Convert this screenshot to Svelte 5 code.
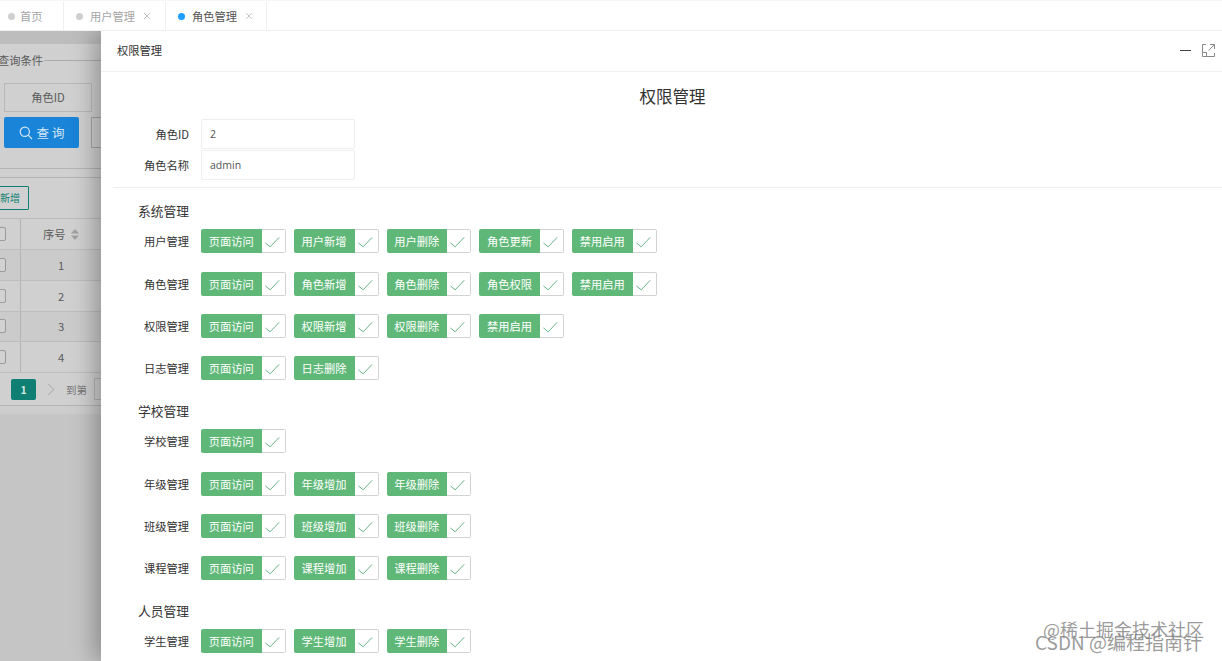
<script>
  const tabs = [
    { name: "首页", width: 64, close: false },
    { name: "用户管理", width: 102, close: true },
    { name: "角色管理", width: 101, close: true, active: true }
  ];

  const sections = [
    {
      title: "系统管理",
      rows: [
        { label: "用户管理", perms: ["页面访问", "用户新增", "用户删除", "角色更新", "禁用启用"] },
        { label: "角色管理", perms: ["页面访问", "角色新增", "角色删除", "角色权限", "禁用启用"] },
        { label: "权限管理", perms: ["页面访问", "权限新增", "权限删除", "禁用启用"] },
        { label: "日志管理", perms: ["页面访问", "日志删除"] }
      ]
    },
    {
      title: "学校管理",
      rows: [
        { label: "学校管理", perms: ["页面访问"] },
        { label: "年级管理", perms: ["页面访问", "年级增加", "年级删除"] },
        { label: "班级管理", perms: ["页面访问", "班级增加", "班级删除"] },
        { label: "课程管理", perms: ["页面访问", "课程增加", "课程删除"] }
      ]
    },
    {
      title: "人员管理",
      rows: [{ label: "学生管理", perms: ["页面访问", "学生增加", "学生删除"] }]
    }
  ];
</script>

<div class="app">
  <nav class="tabs">
    {#each tabs as tab}
      <div class="tab" class:active={tab.active} style="width: {tab.width}px">
        <span class="dot"></span>
        <span class="tab-name">{tab.name}</span>
        {#if tab.close}
          <svg class="tab-close" width="8" height="8" viewBox="0 0 8 8">
            <path d="M1 1 L7 7 M7 1 L1 7" />
          </svg>
        {/if}
      </div>
    {/each}
  </nav>

  <div class="stage">
    <section class="behind">
      <div class="band"></div>
      <div class="panel">
        <div class="legend"><span>查询条件</span><i></i></div>
        <div class="cell">角色ID</div>
        <div class="actions">
          <button class="search">
            <svg width="14" height="14" viewBox="0 0 14 14">
              <circle cx="5.8" cy="5.8" r="4.6" />
              <path d="M9.2 9.2 L13 13" />
            </svg>
            查 询
          </button>
          <span class="ghost"></span>
        </div>
        <div class="rule"></div>
        <button class="add">新增</button>
        <div class="table">
          <div class="tr head">
            <span class="tick"><b></b></span>
            <span class="num">序号
              <svg width="8" height="11" viewBox="0 0 8 11"><path d="M4 0 L8 4.4 H0 Z M4 11 L8 6.6 H0 Z" /></svg>
            </span>
          </div>
          {#each [1, 2, 3, 4] as n}
            <div class="tr" class:odd={n % 2 === 1}>
              <span class="tick"><b></b></span>
              <span class="num">{n}</span>
            </div>
          {/each}
        </div>
        <div class="pager">
          <span class="page-on">1</span>
          <svg width="8" height="13" viewBox="0 0 8 13"><path d="M1 1 L7 6.5 L1 12" /></svg>
          <span class="goto">到第</span>
          <i></i>
        </div>
        <div class="foot"></div>
      </div>
    </section>

    <aside class="drawer">
      <header class="drawer-head">
        <span>权限管理</span>
        <div class="win">
          <svg width="12" height="12" viewBox="0 0 12 12"><path d="M0 6.5 H11" /></svg>
          <svg class="max" width="13" height="13" viewBox="0 0 13 13">
            <path d="M4 .5 H.5 V12.5 H12.5 V9 M8 .5 H12.5 V5 M12.5 .5 L6.5 6.5 M.5 8.5 H4.5 V12.5" />
          </svg>
        </div>
      </header>

      <div class="drawer-body">
        <h1>权限管理</h1>
        <div class="field">
          <label for="role-id">角色ID</label>
          <input id="role-id" value="2" />
        </div>
        <div class="field">
          <label for="role-name">角色名称</label>
          <input id="role-name" value="admin" />
        </div>
        <hr />

        {#each sections as section}
          <h2>{section.title}</h2>
          {#each section.rows as row}
            <div class="perm-row">
              <span class="perm-label">{row.label}</span>
              <div class="perms">
                {#each row.perms as perm}
                  <div class="check">
                    <span class="check-text">{perm}</span>
                    <span class="check-box">
                      <svg width="24" height="24" viewBox="0 0 24 24">
                        <path d="M4.5 14 L9.2 17.8 L18.2 8.3" />
                      </svg>
                    </span>
                  </div>
                {/each}
              </div>
            </div>
          {/each}
        {/each}
      </div>
    </aside>
  </div>

  <div class="mark">
    <span>@稀土掘金技术社区</span>
    <span class="csdn">CSDN @编程指南针</span>
  </div>
</div>

<style>
  :global(body) {
    margin: 0;
    overflow: hidden;
    background: #fff;
  }

  .app {
    position: relative;
    width: 1222px;
    height: 661px;
    overflow: hidden;
    display: flex;
    flex-direction: column;
    font-family: "Noto Sans CJK SC", "Open Sans", sans-serif;
    font-size: 11.25px;
    color: #333;
  }

  .tabs {
    position: relative;
    z-index: 1;
    height: 31px;
    flex: none;
    box-sizing: border-box;
    padding-top: 2px;
    display: flex;
    background: #fff;
    border-top: 1px solid #f6f6f6;
    border-bottom: 1px solid #f0f0f0;
  }

  .tab {
    box-sizing: border-box;
    display: flex;
    align-items: center;
    padding-left: 8px;
    border-right: 1px solid #f0f0f0;
    color: #a5a5a5;
    margin-top: -1px;
  }

  .tab + .tab {
    padding-left: 12px;
  }

  .dot {
    width: 7px;
    height: 7px;
    border-radius: 50%;
    background: #cfcfcf;
    margin-right: 5px;
  }

  .tab + .tab .tab-name {
    margin-left: 2px;
  }

  .tab.active {
    color: #555;
  }

  .tab.active .dot {
    background: #1e9fff;
  }

  .tab-close {
    margin-left: 8px;
    fill: none;
    stroke: #c4c4c4;
    stroke-width: 1;
  }

  .stage {
    flex: 1;
    display: flex;
    min-height: 0;
  }

  .behind {
    width: 101px;
    flex: none;
    overflow: hidden;
    background: #c5c5c5;
    color: #5a5a5a;
  }

  .band {
    height: 13px;
    background: #bdbdbd;
  }

  .panel {
    background: #d0d0d0;
    overflow: hidden;
  }

  .legend {
    display: flex;
    align-items: center;
    gap: 1px;
    height: 16px;
    margin: 8px 0 0 -2px;
    white-space: nowrap;
  }

  .legend i {
    flex: 1;
    height: 1px;
    background: #acacac;
  }

  .cell {
    box-sizing: border-box;
    width: 88px;
    height: 29px;
    margin: 15px 0 0 4px;
    border: 1px solid #b8b8b8;
    display: flex;
    align-items: center;
    justify-content: center;
    padding-bottom: 2px;
  }

  .actions {
    display: flex;
    gap: 12px;
    margin: 5px 0 0 4px;
  }

  .search {
    width: 75px;
    height: 31px;
    flex: none;
    border: 0;
    border-radius: 2px;
    background: #1a84d8;
    color: #d4e6f5;
    font: inherit;
    font-size: 12.5px;
    display: flex;
    align-items: center;
    justify-content: center;
    gap: 4px;
    padding: 0;
  }

  .search svg {
    fill: none;
    stroke: #d4e6f5;
    stroke-width: 1.2;
  }

  .ghost {
    width: 30px;
    height: 29px;
    flex: none;
    border: 1px solid #a5a5a5;
  }

  .rule {
    box-sizing: border-box;
    height: 10px;
    margin-top: 20px;
    border-top: 1px solid #b4b4b4;
    border-bottom: 1px solid #b4b4b4;
  }

  .add {
    display: block;
    box-sizing: border-box;
    width: 38px;
    height: 24px;
    margin: 8px 0 0 -9px;
    padding: 0 8px 2px 0;
    border: 1px solid #0f7f74;
    border-radius: 1px;
    background: transparent;
    color: #0f7f74;
    font: inherit;
    font-size: 10px;
    text-align: right;
  }

  .table {
    margin-top: 8px;
    border-top: 1px solid #bcbcbc;
  }

  .tr {
    display: flex;
    height: 30.75px;
    align-items: center;
    border-bottom: 1px solid #bdbdbd;
    box-sizing: border-box;
  }

  .tr.head {
    height: 31px;
  }

  .tr.odd {
    background: rgba(0, 0, 0, 0.02);
  }

  .tick {
    box-sizing: border-box;
    width: 21px;
    height: 100%;
    flex: none;
    border-right: 1px solid #b4b4b4;
    display: flex;
    align-items: center;
    justify-content: flex-end;
    padding-right: 14px;
  }

  .tick b {
    flex: none;
    width: 14px;
    height: 14px;
    border: 1px solid #9a9a9a;
    border-radius: 2px;
    box-sizing: border-box;
    background: #d2d2d2;
  }

  .num {
    width: 80px;
    text-align: center;
    flex: none;
    white-space: nowrap;
  }

  .num svg {
    fill: #a0a0a0;
    margin-left: 3px;
    vertical-align: -1px;
  }

  .pager {
    display: flex;
    align-items: center;
    box-sizing: border-box;
    height: 33px;
    padding-left: 11px;
    border-bottom: 1px solid #b4b4b4;
  }

  .page-on {
    width: 25px;
    height: 21px;
    flex: none;
    border-radius: 2px;
    background: #0f7f74;
    color: #cfe5e2;
    font-size: 10.5px;
    font-weight: 700;
    display: flex;
    align-items: center;
    justify-content: center;
  }

  .pager svg {
    margin-left: 11px;
    flex: none;
    fill: none;
    stroke: #a8a8a8;
  }

  .goto {
    margin-left: 11px;
    font-size: 10.5px;
    color: #777;
    white-space: nowrap;
    flex: none;
  }

  .pager i {
    margin-left: 7px;
    flex: none;
    width: 20px;
    height: 20px;
    border: 1px solid #b4b4b4;
  }

  .foot {
    height: 8px;
    background: #cdcdcd;
  }

  .drawer {
    position: relative;
    flex: 1;
    min-width: 0;
    background: #fff;
    box-shadow: -6px 0 22px rgba(0, 0, 0, 0.3);
  }

  .drawer-head {
    box-sizing: border-box;
    height: 41px;
    padding: 0 7px 2px 16px;
    display: flex;
    align-items: center;
    justify-content: space-between;
    border-bottom: 1px solid #f0f0f0;
    color: #333;
  }

  .win {
    display: flex;
    align-items: center;
    gap: 10px;
  }

  .win svg {
    fill: none;
    stroke: #444;
    stroke-width: 1;
  }

  .win .max {
    stroke: #888;
  }

  .drawer-body {
    padding-left: 12px;
  }

  h1 {
    margin: 0;
    padding: 12px 0 11px 10px;
    font-size: 16.5px;
    line-height: 24px;
    font-weight: 400;
    text-align: center;
    color: #333;
  }

  .field {
    display: flex;
    align-items: center;
    gap: 12px;
    height: 30px;
    margin-bottom: 1px;
  }

  .field label {
    width: 76px;
    text-align: right;
    flex: none;
    margin-top: -1px;
  }

  .field input {
    box-sizing: border-box;
    width: 154px;
    height: 30px;
    padding: 0 8px;
    border: 1px solid #eee;
    border-radius: 2px;
    font: inherit;
    font-family: "Open Sans", sans-serif;
    font-size: 10.5px;
    color: #555;
    outline: 0;
  }

  hr {
    margin: 7px 0 0;
    height: 1px;
    border: 0;
    background: #eee;
  }

  h2 {
    margin: 0 0 7.68px;
    padding-left: 25px;
    font-size: 12.75px;
    font-weight: 400;
    line-height: 23px;
    color: #333;
  }

  hr + h2 {
    margin-top: 10.62px;
  }

  .perm-row {
    display: flex;
    gap: 12px;
    height: 42.33px;
  }

  .perm-label {
    width: 76px;
    flex: none;
    text-align: right;
    line-height: 24px;
  }

  .perms {
    display: flex;
    gap: 8px;
    align-items: flex-start;
  }

  .check {
    display: flex;
    width: 84.75px;
    height: 24px;
  }

  .check-text {
    width: 60.75px;
    flex: none;
    background: #5fb878;
    color: #fff;
    border-radius: 2px 0 0 2px;
    line-height: 24px;
    text-align: center;
    white-space: nowrap;
  }

  .check-box {
    box-sizing: border-box;
    width: 24px;
    flex: none;
    border: 1px solid #d2d2d2;
    border-left: 0;
    border-radius: 0 2px 2px 0;
    overflow: hidden;
  }

  .check-box svg {
    display: block;
    margin: -1px 0 0 -1px;
    fill: none;
    stroke: #6ab588;
    stroke-width: 1;
  }

  .mark {
    position: absolute;
    left: 1035px;
    top: 620px;
    width: 176px;
    display: flex;
    flex-direction: column;
    font-size: 18px;
    line-height: 18px;
    white-space: nowrap;
    color: rgba(110, 110, 110, 0.7);
    text-shadow: 1px 1px 1px rgba(255, 255, 255, 0.7);
  }

  .mark span:first-child {
    margin-left: 8px;
  }

  .mark .csdn {
    margin-top: -5px;
    font-size: 19px;
  }
</style>
